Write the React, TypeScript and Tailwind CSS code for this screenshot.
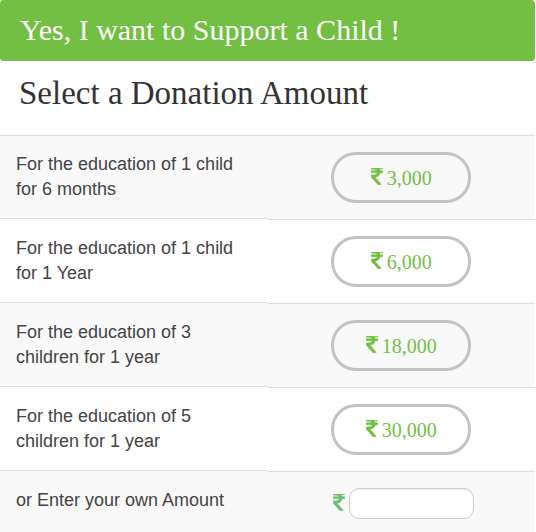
const SANS = "font-['Liberation_Sans',Arial,sans-serif]";
const SERIF = "font-['Liberation_Serif','Times_New_Roman',serif]";

const options = [
  { label: "For the education of 1 child for 6 months", amount: "3,000" },
  { label: "For the education of 1 child for 1 Year", amount: "6,000" },
  { label: "For the education of 3 children for 1 year", amount: "18,000" },
  { label: "For the education of 5 children for 1 year", amount: "30,000" },
];

function Rupee({ className }: { className: string }) {
  return (
    <svg
      aria-hidden="true"
      viewBox="-20 236 938 1320"
      fill="currentColor"
      stroke="currentColor"
      strokeWidth="40"
      className={className}
    >
      <path d="M898 470v102q0 14-9 23t-23 9h-168q-23 144-129 234t-276 110q167 178 459 536 14 16 4 34-8 18-29 18h-195q-16 0-25-12-306-367-498-571-9-9-9-22v-127q0-13 9.500-22.500t22.500-9.500h112q132 0 212.500-43t102.500-125h-427q-14 0-23-9t-9-23v-102q0-14 9-23t23-9h413q-57-113-268-113h-145q-13 0-22.500-9.500t-9.500-22.500v-133q0-14 9-23t23-9h832q14 0 23 9t9 23v102q0 14-9 23t-23 9h-233q47 61 64 144h171q14 0 23 9t9 23z" />
    </svg>
  );
}

export default function App() {
  return (
    <main className={`mr-px bg-white text-[#333] ${SANS}`}>
      <h1 className={`rounded bg-[#73bf43] px-5 pt-[13px] pb-[15px] text-[30px] leading-[33px] text-white ${SERIF}`}>
        Yes, I want to Support a Child !
      </h1>
      <h2 className={`px-[19px] pt-3 pb-[22px] text-[33px] leading-10 ${SERIF}`}>
        Select a Donation Amount
      </h2>
      <form onSubmit={(e) => e.preventDefault()}>
        {options.map((o) => (
          <div key={o.amount} className="group grid grid-cols-2 odd:bg-[#f9f9f9]">
            <p className="border-t border-[#ddd] bg-white px-4 pt-4 text-[18px] leading-[25px] text-[#444] group-odd:bg-[#f9f9f9] group-not-first:-mt-px group-not-first:pt-[17px]">
              <span className="block max-w-[220px]">{o.label}</span>
            </p>
            <div className="flex justify-center border-t border-[#ddd] py-4">
              <button
                type="button"
                className={`flex h-[51px] w-[140px] items-center justify-center gap-1 rounded-[25px] border-3 border-[#c3c3c3] text-[20px] text-[#73bf43] ${SERIF}`}
              >
                <Rupee className="mb-[3px] h-[17px] w-3" />
                {o.amount}
              </button>
            </div>
          </div>
        ))}
        <div className="grid grid-cols-2 bg-[#f9f9f9]">
          <label
            htmlFor="own-amount"
            className="-mt-px border-t border-[#ddd] bg-[#f9f9f9] px-4 pt-[17px] text-[18px] leading-[25px] text-[#444]"
          >
            or Enter your own Amount
          </label>
          <div className="flex items-start justify-center gap-1 border-t border-[#ddd] pt-4 pb-[13px] pl-1">
            <Rupee className="mt-1.5 h-[17px] w-3 text-[#6bbf73]" />
            <input
              id="own-amount"
              type="text"
              className="h-[31px] w-[125px] rounded-[10px] border border-[#ccc] bg-white px-2 text-sm shadow-[inset_0_1px_1px_rgba(0,0,0,0.075)]"
            />
          </div>
        </div>
      </form>
    </main>
  );
}
